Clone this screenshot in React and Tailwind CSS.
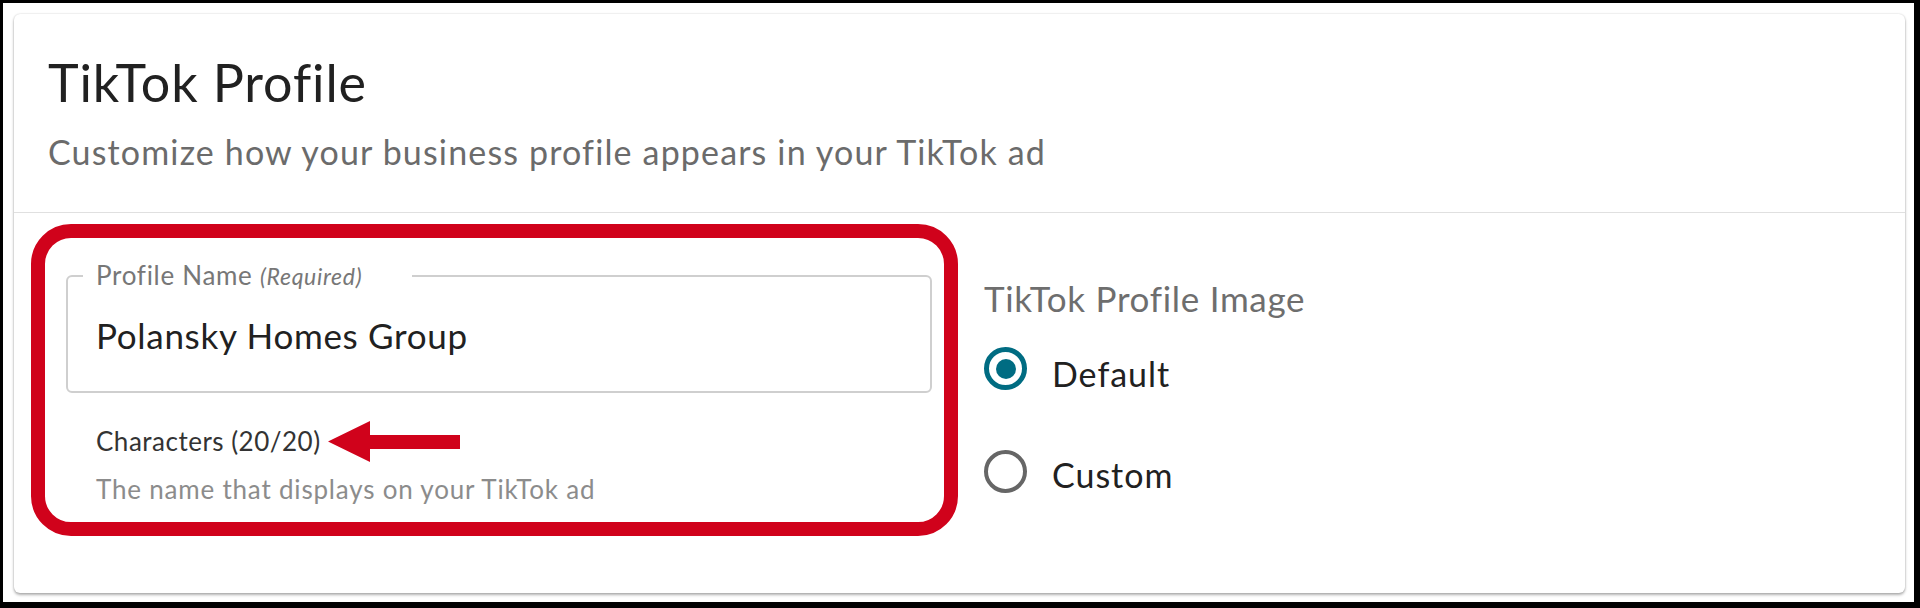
import React from "react";

const font = { fontFamily: "Lato, 'Open Sans', sans-serif" };

function Radio({ checked }) {
  if (checked) {
    return (
      <span className="flex h-[43px] w-[43px] shrink-0 items-center justify-center rounded-full border-[5px] border-[#006c82]">
        <span className="h-[20px] w-[20px] rounded-full bg-[#006c82]" />
      </span>
    );
  }
  return <span className="h-[43px] w-[43px] shrink-0 rounded-full border-[4px] border-[#666666]" />;
}

function ArrowLeft() {
  return (
    <svg width="132" height="41" viewBox="0 0 132 41" className="ml-[7px] shrink-0">
      <polygon points="0,20.5 42,0 42,14 132,14 132,28 42,28 42,41" fill="#d0021b" />
    </svg>
  );
}

export default function App() {
  return (
    <div
      style={font}
      className="box-border h-[608px] w-[1920px] border-t-[3px] border-l-[3px] border-r-[6px] border-b-[6px] border-black bg-white pt-[11px] pl-[11px] pr-[9px] pb-[9px]"
    >
      <div className="flex h-full flex-col rounded-[6px] bg-white shadow-[0_2px_3px_rgba(0,0,0,0.3),0_0_2px_rgba(0,0,0,0.18)]">
        {/* Header */}
        <div className="border-b border-[#e0e0e0] pl-[34px] pt-[37px] pb-[40px]">
          <h1 className="text-[52px] leading-[62px] tracking-[0.9px] text-[#212121]">TikTok Profile</h1>
          <p className="mt-[18px] text-[34px] leading-[41px] tracking-[1.15px] text-[#6b6b6b]">
            Customize how your business profile appears in your TikTok ad
          </p>
        </div>

        {/* Body */}
        <div className="flex items-start pl-[17px] pt-[11px]">
          {/* Profile name field (highlighted) */}
          <div className="w-[927px] shrink-0 rounded-[40px] border-[14px] border-[#d0021b] pl-[21px] pr-[12px] pt-[22px] pb-[17px]">
            <fieldset className="rounded-[6px] border-[2px] border-[#cfcfcf]">
              <legend className="ml-[15px] w-[329px] pl-[13px] text-[26px] leading-[30px] tracking-[0.7px] text-[#777777]">
                Profile Name <span className="text-[23px] italic">(Required)</span>
              </legend>
              <div className="pl-[28px] pt-[23px] pb-[35px] text-[35px] leading-[42px] tracking-[0.7px] text-[#212121]">
                Polansky Homes Group
              </div>
            </fieldset>

            <div className="mt-[28px] flex items-center pl-[30px]">
              <span className="text-[26px] leading-[31px] tracking-[0.5px] text-[#333333]">Characters (20/20)</span>
              <ArrowLeft />
            </div>
            <p className="mt-[12px] pl-[30px] text-[26px] leading-[31px] tracking-[0.8px] text-[#8c8c8c]">
              The name that displays on your TikTok ad
            </p>
          </div>

          {/* Profile image choice */}
          <div className="ml-[26px] mt-[53px] flex flex-col">
            <div className="text-[35px] leading-[42px] tracking-[0.7px] text-[#6e6e6e]">TikTok Profile Image</div>
            <div className="mt-[28px] flex items-start gap-[25px]">
              <Radio checked />
              <span className="mt-[6px] text-[34px] leading-[41px] tracking-[1px] text-[#212121]">Default</span>
            </div>
            <div className="mt-[56px] flex items-start gap-[25px]">
              <Radio />
              <span className="mt-[4px] text-[34px] leading-[41px] tracking-[1px] text-[#212121]">Custom</span>
            </div>
          </div>
        </div>
      </div>
    </div>
  );
}
